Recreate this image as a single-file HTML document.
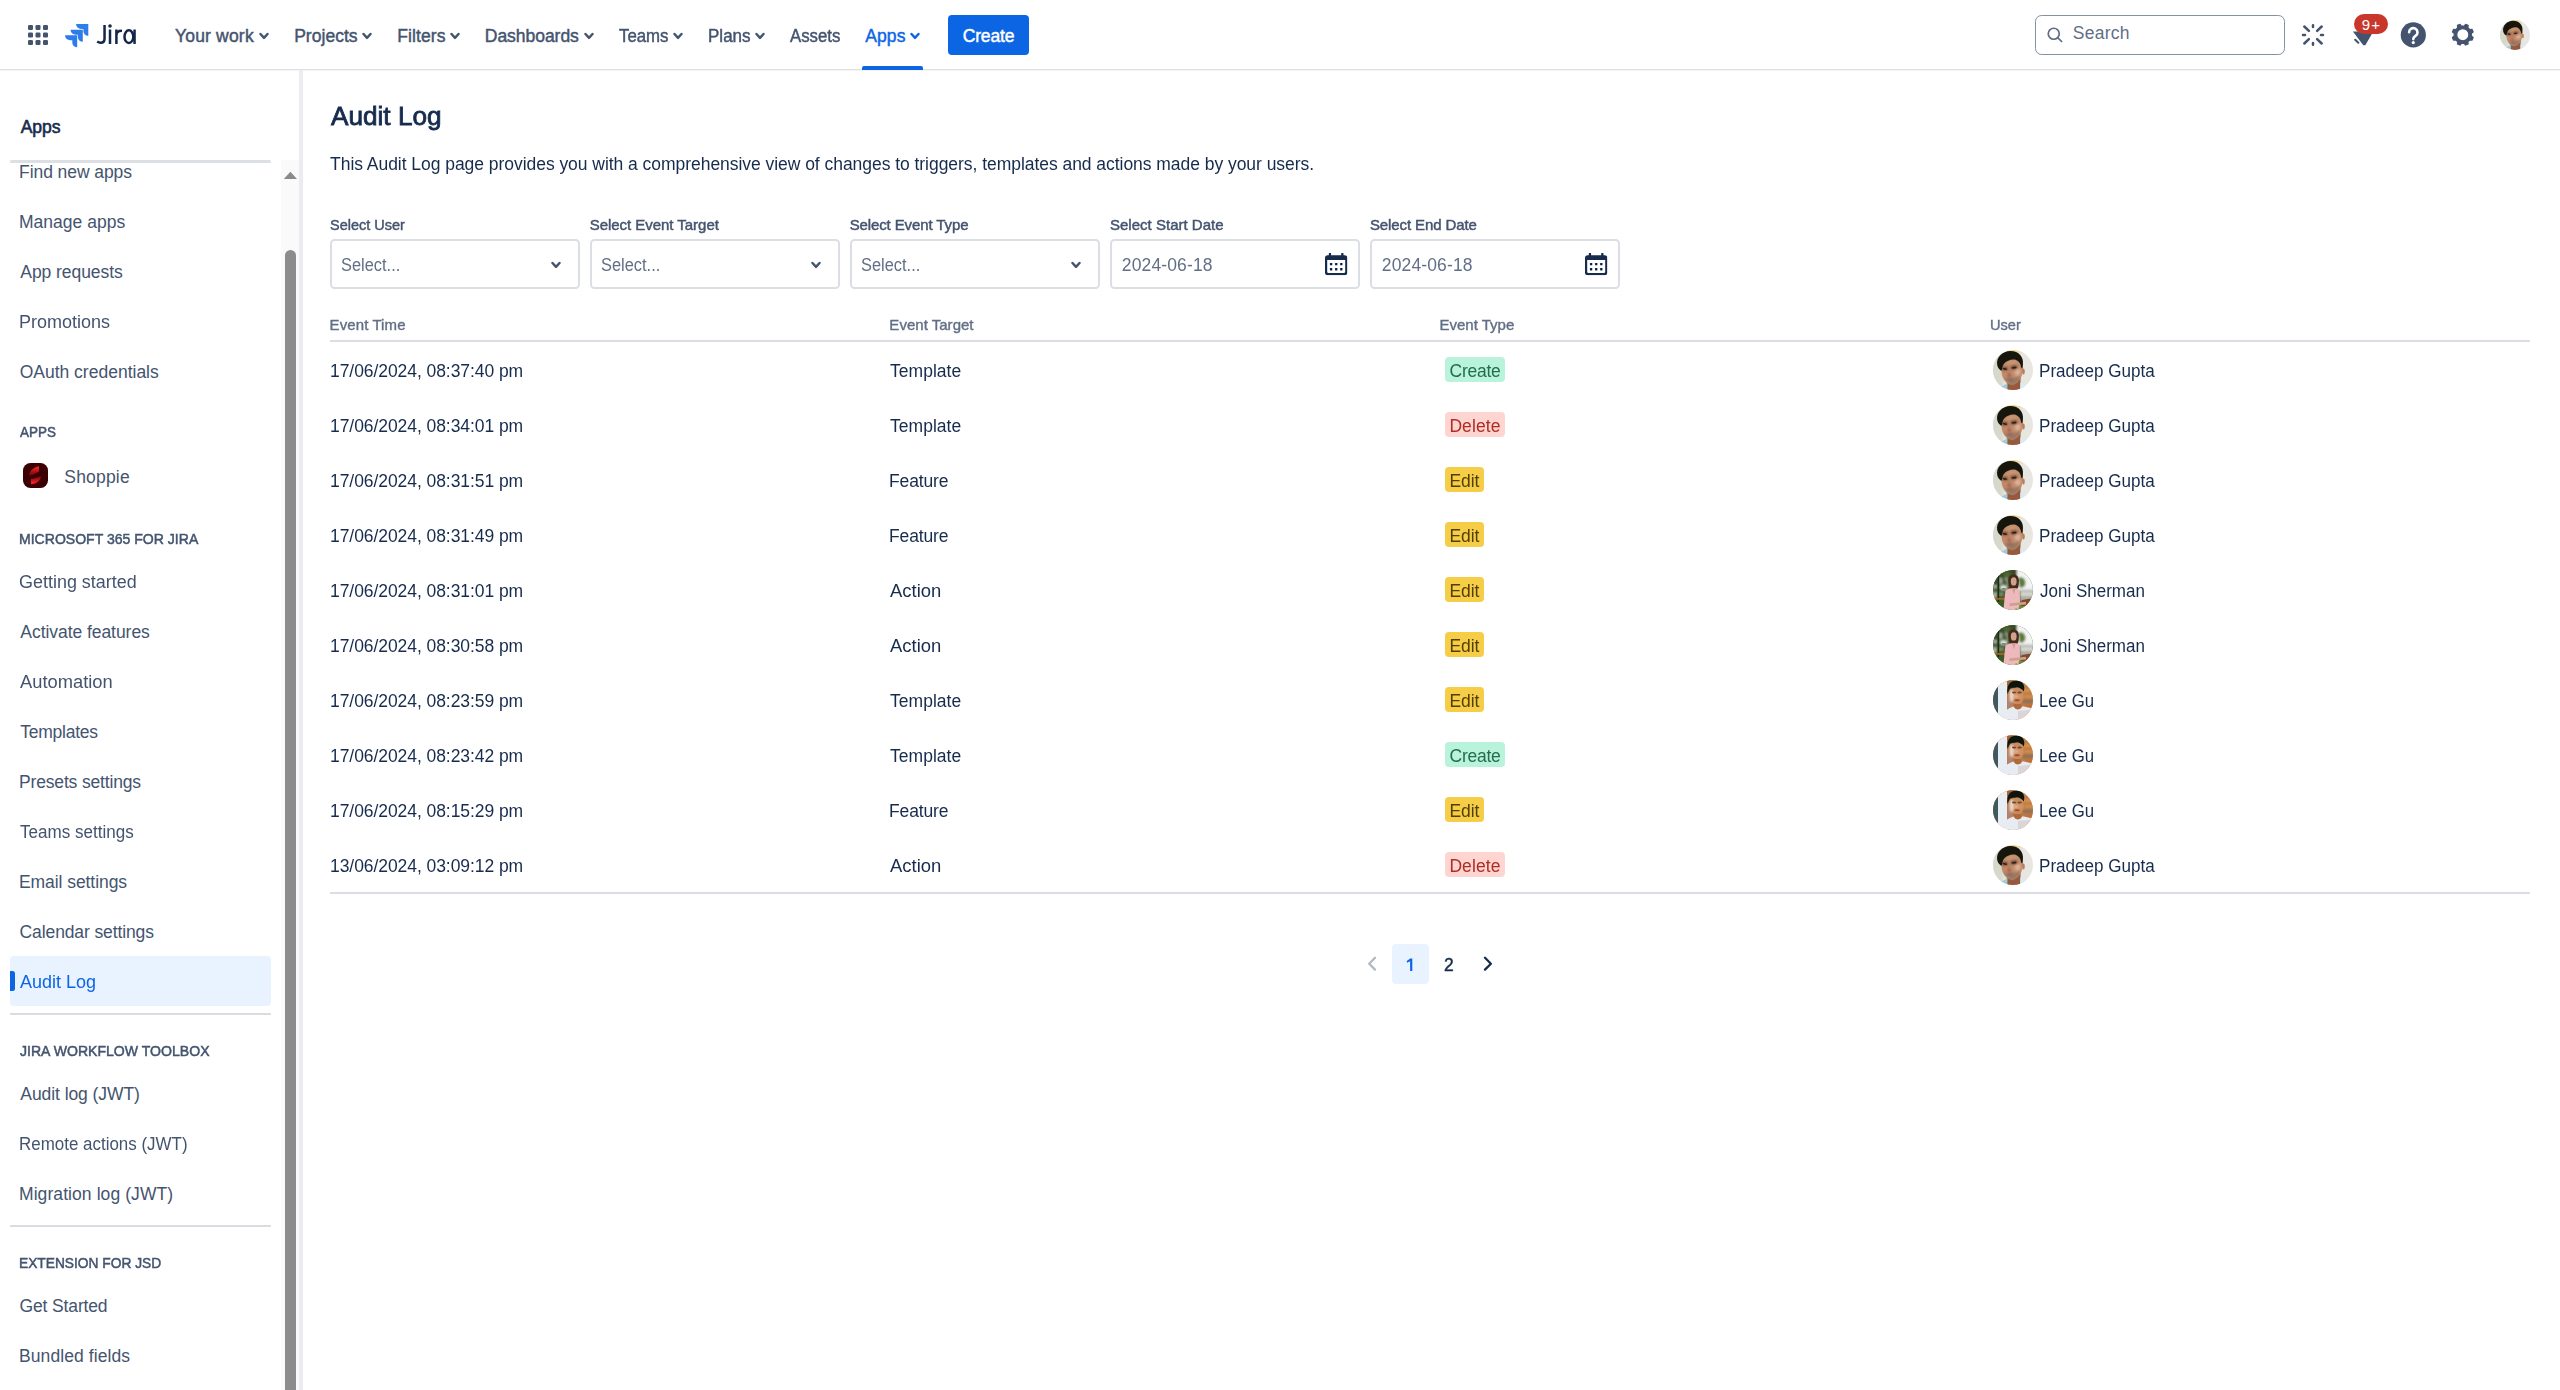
<!DOCTYPE html>
<html lang="en"><head><meta charset="utf-8"><title>Audit Log - Jira</title>
<style>
*{box-sizing:border-box;margin:0;padding:0}
html,body{width:2560px;height:1390px;overflow:hidden;background:#fff;font-family:"Liberation Sans",sans-serif}
#root{position:relative;width:2560px;height:1390px;overflow:hidden;background:#fff}
.t{position:absolute;white-space:nowrap;font-family:"Liberation Sans",sans-serif;transform-origin:0 0}
.a{position:absolute}
svg{position:absolute;overflow:visible}
.sel{position:absolute;top:239px;width:250px;height:50px;border:2px solid #DBDEE4;border-radius:4.5px;background:#fff}
.bdg{position:absolute;height:25px;border-radius:4px}
.hl{position:absolute;left:330px;width:2200px;height:2px;background:#DADDE3}
.sep{position:absolute;left:10px;width:261px;background:#DFE2E7}
</style></head><body>
<div id="root">
<svg width="0" height="0" style="position:absolute">
<defs>
<filter id="b0" x="-20%" y="-20%" width="140%" height="140%"><feGaussianBlur stdDeviation="0.55"/></filter>
<filter id="b3" x="-30%" y="-30%" width="160%" height="160%"><feGaussianBlur stdDeviation="1.1"/></filter>
<filter id="b1" x="-20%" y="-20%" width="140%" height="140%"><feGaussianBlur stdDeviation="0.75"/></filter>
<filter id="b2" x="-20%" y="-20%" width="140%" height="140%"><feGaussianBlur stdDeviation="1.6"/></filter>
<clipPath id="c40"><circle cx="20" cy="20" r="20"/></clipPath>
<symbol id="chv" viewBox="0 0 10 8"><path d="M1.5 2 L5 5.9 L8.5 2" fill="none" stroke="currentColor" stroke-width="2.4" stroke-linecap="round" stroke-linejoin="round"/></symbol>
<symbol id="cal" viewBox="0 0 22.4 22.2">
<path fill="#172B4D" fill-rule="evenodd" d="M3.8 0.9 a1.15 1.15 0 0 1 2.3 0 V2.3 H16.2 V0.9 a1.15 1.15 0 0 1 2.3 0 V2.3 h1.2 a2.7 2.7 0 0 1 2.7 2.7 v14.5 a2.7 2.7 0 0 1 -2.7 2.7 h-17 a2.7 2.7 0 0 1 -2.7 -2.7 v-14.5 a2.7 2.7 0 0 1 2.7 -2.7 h1.1 Z M2.2 6.9 v11.9 a1.3 1.3 0 0 0 1.3 1.3 h15.4 a1.3 1.3 0 0 0 1.3 -1.3 v-11.9 Z"/>
<g fill="#091E42"><rect x="4.95" y="10" width="2.3" height="2.3" rx=".4"/><rect x="10.05" y="10" width="2.3" height="2.3" rx=".4"/><rect x="15.15" y="10" width="2.3" height="2.3" rx=".4"/>
<rect x="4.95" y="15.1" width="2.3" height="2.3" rx=".4"/><rect x="10.05" y="15.1" width="2.3" height="2.3" rx=".4"/><rect x="15.15" y="15.1" width="2.3" height="2.3" rx=".4"/></g>
</symbol>
<!-- Pradeep -->
<symbol id="avP" viewBox="0 0 40 40"><g clip-path="url(#c40)">
<rect width="40" height="40" fill="#E7E6E1"/>
<rect x="-3" y="0" width="13" height="40" fill="#D6D8CC" filter="url(#b2)"/>
<path d="M10 -1 L31 -1 L29 2.4 L12 2.4Z" fill="#F3D77C" filter="url(#b2)"/>
<g filter="url(#b0)">
<path d="M14 30 L27.5 27 L27.5 42 L13.6 42Z" fill="#97583C"/>
<path d="M4 39 L14.6 33.2 L14.2 42 L3 42Z" fill="#9FCBD7"/>
<path d="M27.3 32.6 L34 35 L37 42 L27.2 42Z" fill="#D7EBF1"/>
<path d="M8.4 17 C8 24 10 29 12.6 31.6 C15 34.4 18 35.2 20 34.8 C23.4 34 26.6 30.6 28.2 27 C29.6 24 30.4 21 30 16 C29 11 25 8.6 20 9 C14 9.4 9 12 8.4 17Z" fill="#C18C6A"/>
<ellipse cx="30.5" cy="21.4" rx="1.3" ry="3" fill="#B67E5F"/>
</g>
<g filter="url(#b3)">
<ellipse cx="24.6" cy="22" rx="3" ry="3.6" fill="#E2BAA3" opacity=".8"/>
<ellipse cx="12.2" cy="24" rx="2.4" ry="3.2" fill="#C98668" opacity=".8"/>
<path d="M11.4 27 C14 29.4 22 29.4 27.2 25.4 C26.8 30 23.4 34 20 34.8 C17 35.4 13.2 32.4 11.4 27Z" fill="#8D735F" opacity=".8"/>
<ellipse cx="19" cy="12.6" rx="5" ry="2" fill="#CC9A78" opacity=".7"/>
<path d="M15.2 20 L17 20 L17.8 25.2 L14.4 25.2Z" fill="#A9745A" opacity=".7"/>
<ellipse cx="16.2" cy="25.4" rx="2.1" ry=".9" fill="#84543D"/>
<ellipse cx="17.4" cy="28.8" rx="3.4" ry="1.1" fill="#94605A"/>
</g>
<g filter="url(#b3)">
<ellipse cx="11.9" cy="18.6" rx="3.2" ry="1.9" fill="#5A3A2B" opacity=".85" transform="rotate(8 11.9 18.6)"/>
<ellipse cx="21" cy="17.4" rx="3.6" ry="2" fill="#5A3A2B" opacity=".85" transform="rotate(-6 21 17.4)"/>
</g>
<g filter="url(#b1)">
<ellipse cx="11.9" cy="18.9" rx="2.3" ry=".75" fill="#2A1A14" transform="rotate(8 11.9 18.9)"/>
<ellipse cx="21" cy="17.7" rx="2.6" ry=".8" fill="#2A1A14" transform="rotate(-6 21 17.7)"/>
</g>
<g filter="url(#b0)">
<path d="M4.2 15 C3 7.6 9.4 1.2 17.2 1.1 C25.6 .9 31 7 29.9 14.6 C29.8 16 29.6 17.4 29.2 18.6 L28.2 17.4 C27.6 13.4 25.6 10.8 22 9.6 C17.6 9.2 13.2 11 10.8 14 C9.6 16 9.2 18.4 8.6 20.8 L7.8 20.4 C5.8 19 4.6 17 4.2 15Z" fill="#18150F"/>
</g>
</g></symbol>
<!-- Joni -->
<symbol id="avJ" viewBox="0 0 40 40"><g clip-path="url(#c40)">
<rect x="-5" y="-5" width="50" height="50" fill="#455A2E"/>
<g filter="url(#b3)">
<path d="M24 -6 H48 V21 H24Z" fill="#F3F4F2"/>
<path d="M-5 6 L10 -5 L24 -5 L24 9 L14 10 L8 16 L-5 20Z" fill="#384C25"/>
<path d="M25 8 C29 6 33 9 32.4 14 C32 17 29 18.4 26.6 17.6Z" fill="#5B7C39"/>
<path d="M27 19.6 H48 V31 H27Z" fill="#B9BAB1"/>
<path d="M27 22.6 H48 V25.4 H27Z" fill="#DCDDD6"/>
<path d="M27 27.4 H48 V29 H27Z" fill="#9FA39A"/>
<path d="M22 34 H48 V46 H22Z" fill="#6C8E3B"/>
<rect x="6.2" y="8" width="3.2" height="6" fill="#A3B09E"/><rect x="12" y="7" width="2.6" height="4" fill="#8C9A88"/>
<ellipse cx="10.6" cy="17.6" rx="3.8" ry="2.6" fill="#DCE2DD"/>
<rect x="0" y="15" width="4" height="3.4" fill="#A9B3A4"/><rect x="0" y="22" width="3.8" height="6" fill="#AAB3A0"/>
<rect x="2" y="31" width="9" height="12" fill="#3A5A26"/>
<ellipse cx="15" cy="13" rx="2" ry="3" fill="#7E9170" opacity=".8"/><ellipse cx="8" cy="24" rx="3" ry="2" fill="#8FA088" opacity=".7"/><ellipse cx="14" cy="4" rx="4" ry="2" fill="#55703A" opacity=".8"/>
</g>
<g filter="url(#b0)">
<path d="M29 30 L38 28.4 L37 36.4 L28 36Z" fill="#85462A"/>
<ellipse cx="10.8" cy="18.8" rx="2.2" ry=".9" fill="#6F7F77"/>
<rect x="4.6" y="6" width="1.5" height="26" fill="#1F2A16"/>
<rect x="-2" y="28" width="15" height="1.7" fill="#A7651F"/>
<path d="M15.4 13 C14.6 7 17.4 4.6 20.6 4.6 C24 4.6 26.6 7.2 25.8 13 C25.6 15.4 25.6 17 24.4 18.6 L17 18.6 C15.6 17 15.6 15.4 15.4 13Z" fill="#46291F"/>
<ellipse cx="20.7" cy="11.4" rx="2.9" ry="4.2" fill="#CFA28B"/>
<path d="M12.4 20.8 C14 17.8 25 17.4 26.8 20.2 L27 33 L23.4 46 L9.8 46 L11.4 30Z" fill="#EDB9BC"/>
<path d="M19 18.4 L22.6 18.4 L21 24.6Z" fill="#CFA089"/>
<path d="M16.4 33.6 L33 31.8 L33 34.4 L16.6 36Z" fill="#CFA089"/>
<rect x="22.6" y="38" width="1" height="5" fill="#7A9B45"/>
</g></g></symbol>
<!-- Lee -->
<symbol id="avL" viewBox="0 0 40 40"><g clip-path="url(#c40)">
<rect x="-5" y="-5" width="50" height="50" fill="#BD7B47"/>
<g filter="url(#b3)">
<rect x="28" y="9" width="17" height="3" fill="#D6934F"/><rect x="31" y="15" width="14" height="3" fill="#D08C4C"/>
<rect x="30" y="19.6" width="15" height="3.6" fill="#8A7156"/><rect x="33" y="24.6" width="12" height="3" fill="#C8692F"/>
<rect x="13" y="-5" width="6" height="12" fill="#A8623A"/>
<rect x="14" y="18" width="5" height="10" fill="#B08478"/>
</g>
<g filter="url(#b1)">
<rect x="-6" y="-5" width="11" height="50" fill="#3F595F"/>
<rect x="5" y="-5" width="9" height="50" fill="#E6EEF3"/>
<path d="M14.4 14 C13.4 4 18 .6 24 .6 C30 .8 32.4 6 30.8 11.6 L29.4 9.8 C26 7.4 20 7 17.2 8.8 C16.2 10.4 15.6 12.4 14.4 14Z" fill="#0D130F"/>
<ellipse cx="24.2" cy="16" rx="6.6" ry="8.8" fill="#C98B5D"/>
<path d="M20.6 24 L28 24 L29 30 L21 30Z" fill="#AF6A3A"/>
</g>
<g filter="url(#b3)">
<ellipse cx="18.6" cy="15.6" rx="2.2" ry="6.6" fill="#EDD9CD"/>
<ellipse cx="23.4" cy="16.4" rx="1.5" ry="1.7" fill="#E8C3A6"/>
<ellipse cx="27.6" cy="17" rx="2" ry="2.4" fill="#D69560"/>
</g>
<g filter="url(#b1)">
<ellipse cx="21" cy="12.6" rx="2.1" ry="1" fill="#6F4530"/><ellipse cx="26.6" cy="12.4" rx="2.2" ry="1" fill="#6F4530"/>
<ellipse cx="24" cy="20.3" rx="2.8" ry="1.05" fill="#A8452F"/>
<path d="M6 37 C10 31 17 27.4 20.6 26.4 C22.4 30.4 27 30.6 29.4 26.2 C33 26.8 38 28 45 30 V46 H3Z" fill="#E9EBF2"/>
<path d="M25 31 L45 29 L45 46 L25 46Z" fill="#D8CFCF" opacity=".8"/>
</g></g></symbol>

</defs></svg>

<!-- ============ TOP NAV ============ -->
<div class="a" style="left:0;top:69px;width:2560px;height:1px;background:#DCDFE4"></div>
<div class="a" style="left:0;top:70px;width:2560px;height:1px;background:#F4F5F7"></div>
<svg style="left:28px;top:25px" width="20" height="20" viewBox="0 0 20 20" fill="#44546F">
<rect x="0" y="0" width="5" height="5" rx="1.2"/><rect x="7.5" y="0" width="5" height="5" rx="1.2"/><rect x="15" y="0" width="5" height="5" rx="1.2"/>
<rect x="0" y="7.5" width="5" height="5" rx="1.2"/><rect x="7.5" y="7.5" width="5" height="5" rx="1.2"/><rect x="15" y="7.5" width="5" height="5" rx="1.2"/>
<rect x="0" y="15" width="5" height="5" rx="1.2"/><rect x="7.5" y="15" width="5" height="5" rx="1.2"/><rect x="15" y="15" width="5" height="5" rx="1.2"/>
</svg>
<svg style="left:64.9px;top:23.9px" width="23.3" height="23.5" viewBox="0 0 23.3 23.5">
<defs><linearGradient id="jg1" x1="1" y1="0" x2=".35" y2=".75"><stop offset=".15" stop-color="#1B63D3"/><stop offset="1" stop-color="#2F80EE"/></linearGradient>
<path id="jarrow" d="M0 0 h12.2 v12 a4.9 4.9 0 0 1 -4.9 -4.9 v-2.2 h-2.3 a5 4.9 0 0 1 -5 -4.9 z"/></defs>
<use href="#jarrow" x="11.1" y="0" fill="#2F7DE9"/>
<use href="#jarrow" x="5.6" y="5.85" fill="#2D7CE8"/>
<use href="#jarrow" x="0" y="11.35" fill="#2C7DEB"/>
</svg>
<svg style="left:0;top:0" width="150" height="60" viewBox="0 0 150 60" fill="none" stroke="#14264A" stroke-width="2.5">
<path d="M104.55 24.9 V38.4 C104.55 41.2 103 42.7 100.7 42.7 C99.3 42.7 98.2 42.3 97.2 41.6"/>
<path d="M110 29.5 V43.95"/><circle cx="110" cy="26" r="1.8" fill="#14264A" stroke="none"/>
<path d="M116.4 29.5 V43.95 M116.4 35.6 C116.4 32.3 118.6 30.6 122 30.9"/>
<ellipse cx="128.9" cy="36.65" rx="4.4" ry="6.3"/><path d="M134.55 29.5 V43.95"/>
</svg>
<!-- nav chevrons -->
<svg style="left:259.1px;top:31.5px;color:#44546F" width="10" height="8"><use href="#chv"/></svg>
<svg style="left:362.2px;top:31.5px;color:#44546F" width="10" height="8"><use href="#chv"/></svg>
<svg style="left:450px;top:31.5px;color:#44546F" width="10" height="8"><use href="#chv"/></svg>
<svg style="left:583.8px;top:31.5px;color:#44546F" width="10" height="8"><use href="#chv"/></svg>
<svg style="left:673px;top:31.5px;color:#44546F" width="10" height="8"><use href="#chv"/></svg>
<svg style="left:755px;top:31.5px;color:#44546F" width="10" height="8"><use href="#chv"/></svg>
<svg style="left:910px;top:31.5px;color:#0C66E4" width="10" height="8"><use href="#chv"/></svg>
<div class="a" style="left:862px;top:66px;width:61px;height:4px;background:#0C66E4;border-radius:2px 2px 0 0"></div>
<div class="a" style="left:948px;top:15px;width:81px;height:40px;background:#0C66E4;border-radius:4px"></div>
<!-- search -->
<div class="a" style="left:2035px;top:15px;width:250px;height:40px;border:1px solid #8590A2;border-radius:6.5px;background:#fff"></div>
<svg style="left:2045px;top:25px" width="20" height="20" viewBox="0 0 20 20" fill="none" stroke="#5E6C84" stroke-width="1.7" stroke-linecap="round"><circle cx="8.75" cy="8.75" r="5.5"/><path d="M12.9 12.9 L16.6 16.5"/></svg>
<!-- sparkle -->
<svg style="left:2301px;top:23px" width="24" height="24" viewBox="0 0 24 24" fill="none" stroke="#44546F" stroke-width="2.5" stroke-linecap="round">
<path d="M12 2.2 V4 M12 20 V21.8 M2 12 H4 M20 12 H22 M3.3 3.5 L7.9 7.9 M20.7 3.5 L16.1 7.9 M3.3 20.5 L7.9 16.1 M20.7 20.5 L16.1 16.1"/></svg>
<!-- bell -->
<svg style="left:2350px;top:26px" width="26" height="22" viewBox="0 0 26 22"><path d="M2.9 5.6 L23.3 5.6 L15.3 19.2 L13.3 19.2 Z" fill="#44546F"/><path d="M5.2 13.8 L8.3 16.7" stroke="#44546F" stroke-width="2.1" stroke-linecap="round"/></svg>
<div class="a" style="left:2354px;top:14px;width:34px;height:20px;border-radius:10px;background:#C9372C"></div>
<!-- help -->
<svg style="left:2400px;top:22px" width="26" height="26" viewBox="0 0 26 26"><circle cx="13.3" cy="12.9" r="12.6" fill="#44546F"/>
<path d="M9.1 10.3 a4.2 4.2 0 1 1 6.4 3.6 c-1.6 1 -2.2 1.7 -2.2 3.2" fill="none" stroke="#fff" stroke-width="2.6" stroke-linecap="round"/><circle cx="13.3" cy="20.6" r="1.6" fill="#fff"/></svg>
<svg style="left:2450px;top:22px" width="26" height="26" viewBox="0 0 26 26"><path d="M14.23 4.12 L15.62 2.38 L18.10 3.41 L17.86 5.62 L19.88 7.64 L22.09 7.40 L23.12 9.88 L21.38 11.27 L21.38 14.13 L23.12 15.52 L22.09 18.00 L19.88 17.76 L17.86 19.78 L18.10 21.99 L15.62 23.02 L14.23 21.28 L11.37 21.28 L9.98 23.02 L7.50 21.99 L7.74 19.78 L5.72 17.76 L3.51 18.00 L2.48 15.52 L4.22 14.13 L4.22 11.27 L2.48 9.88 L3.51 7.40 L5.72 7.64 L7.74 5.62 L7.50 3.41 L9.98 2.38 L11.37 4.12 Z M6.70 12.70 a6.1 6.1 0 1 0 12.2 0 a6.1 6.1 0 1 0 -12.2 0 Z" fill="#44546F" fill-rule="evenodd" stroke="#44546F" stroke-width="1.3" stroke-linejoin="round"/></svg>
<svg class="av" style="left:2500px;top:20px" width="30" height="30" viewBox="0 0 40 40"><use href="#avP"/></svg>

<!-- ============ SIDEBAR ============ -->
<div class="a" style="left:299px;top:70px;width:4px;height:1320px;background:#EBECF0"></div>
<div class="a" style="left:281px;top:160px;width:18px;height:1230px;background:#FAFAFA"></div>
<div class="sep" style="top:160px;height:3px;background:#DCDFE4;border-radius:1.5px"></div>
<svg style="left:283px;top:171px" width="16" height="9" viewBox="0 0 16 9"><path d="M0.8 8 L14 8 L7.4 0.7 Z" fill="#8A8A8A"/></svg>
<div class="a" style="left:285px;top:250px;width:11px;height:1160px;border-radius:5.5px;background:#8C8C8C"></div>
<svg style="left:23px;top:463px" width="25" height="25" viewBox="0 0 25 25">
<defs><linearGradient id="sg1" x1="0" y1="0" x2="0" y2="1"><stop offset=".1" stop-color="#FF1F29"/><stop offset="1" stop-color="#5E060B"/></linearGradient>
<linearGradient id="sg2" x1="0" y1="0" x2="0" y2="1"><stop offset="0" stop-color="#5E060B"/><stop offset=".85" stop-color="#FF1F29"/></linearGradient></defs>
<rect width="25" height="25" rx="7.5" fill="#3B0002"/>
<path d="M16 3.2 L16 8.4 C13.6 9.2 11.4 12 6 12.8 C6 8.6 10.4 4 16 3.2Z" fill="url(#sg1)"/>
<path d="M8 21.3 L7.9 16.1 C11 15.7 14 14.4 18.1 12.9 C18.2 16.6 13.6 21 8 21.3Z" fill="url(#sg2)"/>
</svg>
<div class="a" style="left:10px;top:956px;width:261px;height:50px;border-radius:4px;background:#E9F2FF"></div>
<div class="a" style="left:10px;top:971px;width:5px;height:20px;border-radius:0 2.5px 2.5px 0;background:#0C66E4"></div>
<div class="sep" style="top:1013px;height:2px;background:#D9DCE1"></div>
<div class="sep" style="top:1225px;height:2px;background:#D9DCE1"></div>

<!-- ============ MAIN ============ -->
<div class="sel" style="left:330px"></div><div class="sel" style="left:590px"></div><div class="sel" style="left:850px"></div>
<div class="sel" style="left:1110px"></div><div class="sel" style="left:1370px"></div>
<svg style="left:551px;top:260.5px;color:#44546F" width="10" height="8"><use href="#chv"/></svg>
<svg style="left:811px;top:260.5px;color:#44546F" width="10" height="8"><use href="#chv"/></svg>
<svg style="left:1071px;top:260.5px;color:#44546F" width="10" height="8"><use href="#chv"/></svg>
<svg style="left:1324.8px;top:252.8px" width="22.4" height="22.2"><use href="#cal"/></svg>
<svg style="left:1584.8px;top:252.8px" width="22.4" height="22.2"><use href="#cal"/></svg>
<div class="hl" style="top:340px"></div>
<div class="hl" style="top:892px"></div>
<div class="bdg" style="left:1445px;top:357px;width:59.9px;background:#BAF3DB"></div>
<svg class="av" style="left:1993px;top:350px" width="40" height="40" viewBox="0 0 40 40"><use href="#avP"/></svg>
<div class="bdg" style="left:1445px;top:412px;width:59.9px;background:#FFD5D2"></div>
<svg class="av" style="left:1993px;top:405px" width="40" height="40" viewBox="0 0 40 40"><use href="#avP"/></svg>
<div class="bdg" style="left:1445px;top:467px;width:38.9px;background:#F5CD47"></div>
<svg class="av" style="left:1993px;top:460px" width="40" height="40" viewBox="0 0 40 40"><use href="#avP"/></svg>
<div class="bdg" style="left:1445px;top:522px;width:38.9px;background:#F5CD47"></div>
<svg class="av" style="left:1993px;top:515px" width="40" height="40" viewBox="0 0 40 40"><use href="#avP"/></svg>
<div class="bdg" style="left:1445px;top:577px;width:38.9px;background:#F5CD47"></div>
<svg class="av" style="left:1993px;top:570px" width="40" height="40" viewBox="0 0 40 40"><use href="#avJ"/></svg>
<div class="bdg" style="left:1445px;top:632px;width:38.9px;background:#F5CD47"></div>
<svg class="av" style="left:1993px;top:625px" width="40" height="40" viewBox="0 0 40 40"><use href="#avJ"/></svg>
<div class="bdg" style="left:1445px;top:687px;width:38.9px;background:#F5CD47"></div>
<svg class="av" style="left:1993px;top:680px" width="40" height="40" viewBox="0 0 40 40"><use href="#avL"/></svg>
<div class="bdg" style="left:1445px;top:742px;width:59.9px;background:#BAF3DB"></div>
<svg class="av" style="left:1993px;top:735px" width="40" height="40" viewBox="0 0 40 40"><use href="#avL"/></svg>
<div class="bdg" style="left:1445px;top:797px;width:38.9px;background:#F5CD47"></div>
<svg class="av" style="left:1993px;top:790px" width="40" height="40" viewBox="0 0 40 40"><use href="#avL"/></svg>
<div class="bdg" style="left:1445px;top:852px;width:59.9px;background:#FFD5D2"></div>
<svg class="av" style="left:1993px;top:845px" width="40" height="40" viewBox="0 0 40 40"><use href="#avP"/></svg>
<!-- pagination -->
<svg style="left:1366px;top:955px" width="12" height="18" viewBox="0 0 12 18"><path d="M9 2.8 L3.2 8.7 L9 14.6" fill="none" stroke="#B3B9C4" stroke-width="2.3" stroke-linecap="round" stroke-linejoin="round"/></svg>
<div class="a" style="left:1392px;top:944px;width:37px;height:40px;border-radius:4px;background:#E9F2FF"></div>
<svg style="left:0;top:0" width="10" height="10"><path d="M1410.2 958.4 L1412.3 958.4 L1412.3 970.9 L1410.1 970.9 L1410.1 961.2 L1407.1 962.7 L1406.7 960.9 Z" fill="#0C66E4"/></svg>
<svg style="left:1482px;top:955px" width="12" height="18" viewBox="0 0 12 18"><path d="M3 2.8 L8.9 8.7 L3 14.6" fill="none" stroke="#172B4D" stroke-width="2.3" stroke-linecap="round" stroke-linejoin="round"/></svg>

<span class="t" style="left:174.96px;top:25.00px;font-size:17.50px;line-height:23.55px;color:#44546F;-webkit-text-stroke:0.45px currentColor;letter-spacing:0.190px;">Your work</span>
<span class="t" style="left:294.16px;top:25.00px;font-size:17.50px;line-height:23.55px;color:#44546F;-webkit-text-stroke:0.45px currentColor;letter-spacing:0.034px;">Projects</span>
<span class="t" style="left:397.26px;top:25.00px;font-size:17.50px;line-height:23.55px;color:#44546F;-webkit-text-stroke:0.45px currentColor;letter-spacing:0.110px;">Filters</span>
<span class="t" style="left:484.84px;top:25.00px;font-size:17.50px;line-height:23.55px;color:#44546F;-webkit-text-stroke:0.45px currentColor;letter-spacing:-0.040px;">Dashboards</span>
<span class="t" style="left:618.85px;top:25.00px;font-size:17.50px;line-height:23.55px;color:#44546F;-webkit-text-stroke:0.45px currentColor;transform:scaleX(0.9606);">Teams</span>
<span class="t" style="left:707.77px;top:25.00px;font-size:17.50px;line-height:23.55px;color:#44546F;-webkit-text-stroke:0.45px currentColor;transform:scaleX(0.9730);">Plans</span>
<span class="t" style="left:790.37px;top:25.00px;font-size:17.50px;line-height:23.55px;color:#44546F;-webkit-text-stroke:0.45px currentColor;transform:scaleX(0.9570);">Assets</span>
<span class="t" style="left:865.19px;top:25.00px;font-size:17.50px;line-height:23.55px;color:#0C66E4;-webkit-text-stroke:0.45px currentColor;letter-spacing:0.136px;">Apps</span>
<span class="t" style="left:962.68px;top:25.00px;font-size:17.50px;line-height:23.55px;color:#FFFFFF;-webkit-text-stroke:0.45px currentColor;letter-spacing:-0.140px;">Create</span>
<span class="t" style="left:2072.81px;top:22.00px;font-size:17.50px;line-height:23.55px;color:#626F86;letter-spacing:0.265px;">Search</span>
<span class="t" style="left:2361.70px;top:14.72px;font-size:15.00px;line-height:20.75px;color:#FFFFFF;letter-spacing:1.200px;">9+</span>
<span class="t" style="left:20.63px;top:116.00px;font-size:17.50px;line-height:23.55px;color:#172B4D;-webkit-text-stroke:0.60px currentColor;letter-spacing:0.020px;">Apps</span>
<span class="t" style="left:19.09px;top:161.00px;font-size:17.50px;line-height:23.55px;color:#44546F;letter-spacing:-0.073px;">Find new apps</span>
<span class="t" style="left:18.99px;top:211.00px;font-size:17.50px;line-height:23.55px;color:#44546F;letter-spacing:0.025px;">Manage apps</span>
<span class="t" style="left:20.33px;top:261.00px;font-size:17.50px;line-height:23.55px;color:#44546F;letter-spacing:-0.070px;">App requests</span>
<span class="t" style="left:18.91px;top:311.00px;font-size:17.50px;line-height:23.55px;color:#44546F;transform:scaleX(1.0296);">Promotions</span>
<span class="t" style="left:19.63px;top:361.00px;font-size:17.50px;line-height:23.55px;color:#44546F;letter-spacing:0.002px;">OAuth credentials</span>
<span class="t" style="left:19.10px;top:571.00px;font-size:17.50px;line-height:23.55px;color:#44546F;transform:scaleX(1.0258);">Getting started</span>
<span class="t" style="left:20.33px;top:621.00px;font-size:17.50px;line-height:23.55px;color:#44546F;letter-spacing:-0.054px;">Activate features</span>
<span class="t" style="left:20.28px;top:671.00px;font-size:17.50px;line-height:23.55px;color:#44546F;transform:scaleX(1.0473);">Automation</span>
<span class="t" style="left:20.16px;top:721.00px;font-size:17.50px;line-height:23.55px;color:#44546F;letter-spacing:-0.225px;">Templates</span>
<span class="t" style="left:19.04px;top:771.00px;font-size:17.50px;line-height:23.55px;color:#44546F;letter-spacing:-0.167px;">Presets settings</span>
<span class="t" style="left:19.93px;top:821.00px;font-size:17.50px;line-height:23.55px;color:#44546F;transform:scaleX(0.9742);">Teams settings</span>
<span class="t" style="left:18.99px;top:871.00px;font-size:17.50px;line-height:23.55px;color:#44546F;letter-spacing:-0.065px;">Email settings</span>
<span class="t" style="left:19.60px;top:921.00px;font-size:17.50px;line-height:23.55px;color:#44546F;letter-spacing:-0.114px;">Calendar settings</span>
<span class="t" style="left:20.33px;top:1083.01px;font-size:17.50px;line-height:23.55px;color:#44546F;letter-spacing:-0.074px;">Audit log (JWT)</span>
<span class="t" style="left:19.41px;top:1133.01px;font-size:17.50px;line-height:23.55px;color:#44546F;transform:scaleX(0.9682);">Remote actions (JWT)</span>
<span class="t" style="left:18.99px;top:1183.01px;font-size:17.50px;line-height:23.55px;color:#44546F;letter-spacing:0.081px;">Migration log (JWT)</span>
<span class="t" style="left:19.57px;top:1295.00px;font-size:17.50px;line-height:23.55px;color:#44546F;letter-spacing:-0.146px;">Get Started</span>
<span class="t" style="left:18.99px;top:1345.00px;font-size:17.50px;line-height:23.55px;color:#44546F;letter-spacing:0.088px;">Bundled fields</span>
<span class="t" style="left:19.93px;top:971.00px;font-size:17.50px;line-height:23.55px;color:#0C66E4;transform:scaleX(1.0280);">Audit Log</span>
<span class="t" style="left:64.35px;top:466.01px;font-size:17.50px;line-height:23.55px;color:#44546F;letter-spacing:0.179px;">Shoppie</span>
<span class="t" style="left:20.17px;top:422.01px;font-size:15.00px;line-height:20.75px;color:#44546F;-webkit-text-stroke:0.51px currentColor;transform:scaleX(0.8963);">APPS</span>
<span class="t" style="left:19.22px;top:529.01px;font-size:15.00px;line-height:20.75px;color:#44546F;-webkit-text-stroke:0.51px currentColor;transform:scaleX(0.9364);">MICROSOFT 365 FOR JIRA</span>
<span class="t" style="left:20.41px;top:1041.00px;font-size:15.00px;line-height:20.75px;color:#44546F;-webkit-text-stroke:0.51px currentColor;transform:scaleX(0.9386);">JIRA WORKFLOW TOOLBOX</span>
<span class="t" style="left:19.02px;top:1253.00px;font-size:15.00px;line-height:20.75px;color:#44546F;-webkit-text-stroke:0.51px currentColor;transform:scaleX(0.9169);">EXTENSION FOR JSD</span>
<div id="txt" style="position:absolute;left:0;top:0;width:2560px;height:1390px;will-change:transform">
<span class="t" style="left:330.72px;top:101.00px;font-size:25.00px;line-height:31.93px;color:#172B4D;-webkit-text-stroke:0.78px currentColor;transform:scaleX(1.0465);">Audit Log</span>
<span class="t" style="left:330.10px;top:153.01px;font-size:17.50px;line-height:23.55px;color:#172B4D;letter-spacing:-0.043px;">This Audit Log page provides you with a comprehensive view of changes to triggers, templates and actions made by your users.</span>
<span class="t" style="left:329.51px;top:215.00px;font-size:15.00px;line-height:20.75px;color:#44546F;-webkit-text-stroke:0.46px currentColor;transform:scaleX(0.9652);">Select User</span>
<span class="t" style="left:589.71px;top:215.00px;font-size:15.00px;line-height:20.75px;color:#44546F;-webkit-text-stroke:0.46px currentColor;letter-spacing:-0.036px;">Select Event Target</span>
<span class="t" style="left:849.63px;top:215.00px;font-size:15.00px;line-height:20.75px;color:#44546F;-webkit-text-stroke:0.46px currentColor;letter-spacing:-0.109px;">Select Event Type</span>
<span class="t" style="left:1110.01px;top:215.00px;font-size:15.00px;line-height:20.75px;color:#44546F;-webkit-text-stroke:0.46px currentColor;letter-spacing:0.012px;">Select Start Date</span>
<span class="t" style="left:1369.98px;top:215.00px;font-size:15.00px;line-height:20.75px;color:#44546F;-webkit-text-stroke:0.46px currentColor;letter-spacing:-0.112px;">Select End Date</span>
<span class="t" style="left:341.40px;top:254.00px;font-size:17.50px;line-height:23.55px;color:#626F86;transform:scaleX(0.9373);">Select...</span>
<span class="t" style="left:601.40px;top:254.00px;font-size:17.50px;line-height:23.55px;color:#626F86;transform:scaleX(0.9373);">Select...</span>
<span class="t" style="left:861.40px;top:254.00px;font-size:17.50px;line-height:23.55px;color:#626F86;transform:scaleX(0.9373);">Select...</span>
<span class="t" style="left:1121.85px;top:254.00px;font-size:17.50px;line-height:23.55px;color:#626F86;letter-spacing:0.124px;">2024-06-18</span>
<span class="t" style="left:1381.85px;top:254.00px;font-size:17.50px;line-height:23.55px;color:#626F86;letter-spacing:0.124px;">2024-06-18</span>
<span class="t" style="left:329.58px;top:315.01px;font-size:15.00px;line-height:20.75px;color:#626F86;-webkit-text-stroke:0.39px currentColor;letter-spacing:0.096px;">Event Time</span>
<span class="t" style="left:889.37px;top:315.01px;font-size:15.00px;line-height:20.75px;color:#626F86;-webkit-text-stroke:0.39px currentColor;letter-spacing:0.021px;">Event Target</span>
<span class="t" style="left:1439.38px;top:315.01px;font-size:15.00px;line-height:20.75px;color:#626F86;-webkit-text-stroke:0.39px currentColor;letter-spacing:0.016px;">Event Type</span>
<span class="t" style="left:1989.84px;top:315.01px;font-size:15.00px;line-height:20.75px;color:#626F86;-webkit-text-stroke:0.39px currentColor;transform:scaleX(0.9727);">User</span>
<span class="t" style="left:330.02px;top:360.01px;font-size:17.50px;line-height:23.55px;color:#172B4D;letter-spacing:-0.067px;">17/06/2024, 08:37:40 pm</span>
<span class="t" style="left:890.00px;top:360.01px;font-size:17.50px;line-height:23.55px;color:#172B4D;letter-spacing:0.025px;">Template</span>
<span class="t" style="left:1449.61px;top:360.01px;font-size:17.50px;line-height:23.55px;color:#216E4E;letter-spacing:-0.262px;">Create</span>
<span class="t" style="left:2039.36px;top:360.01px;font-size:17.50px;line-height:23.55px;color:#172B4D;transform:scaleX(0.9747);">Pradeep Gupta</span>
<span class="t" style="left:330.02px;top:415.01px;font-size:17.50px;line-height:23.55px;color:#172B4D;letter-spacing:-0.067px;">17/06/2024, 08:34:01 pm</span>
<span class="t" style="left:890.00px;top:415.01px;font-size:17.50px;line-height:23.55px;color:#172B4D;letter-spacing:0.025px;">Template</span>
<span class="t" style="left:1449.38px;top:415.01px;font-size:17.50px;line-height:23.55px;color:#AE2E24;letter-spacing:0.093px;">Delete</span>
<span class="t" style="left:2039.36px;top:415.01px;font-size:17.50px;line-height:23.55px;color:#172B4D;transform:scaleX(0.9747);">Pradeep Gupta</span>
<span class="t" style="left:330.02px;top:470.01px;font-size:17.50px;line-height:23.55px;color:#172B4D;letter-spacing:-0.067px;">17/06/2024, 08:31:51 pm</span>
<span class="t" style="left:889.06px;top:470.01px;font-size:17.50px;line-height:23.55px;color:#172B4D;letter-spacing:-0.150px;">Feature</span>
<span class="t" style="left:1449.60px;top:470.01px;font-size:17.50px;line-height:23.55px;color:#533F04;letter-spacing:-0.162px;">Edit</span>
<span class="t" style="left:2039.36px;top:470.01px;font-size:17.50px;line-height:23.55px;color:#172B4D;transform:scaleX(0.9747);">Pradeep Gupta</span>
<span class="t" style="left:330.02px;top:525.01px;font-size:17.50px;line-height:23.55px;color:#172B4D;letter-spacing:-0.067px;">17/06/2024, 08:31:49 pm</span>
<span class="t" style="left:889.06px;top:525.01px;font-size:17.50px;line-height:23.55px;color:#172B4D;letter-spacing:-0.150px;">Feature</span>
<span class="t" style="left:1449.60px;top:525.01px;font-size:17.50px;line-height:23.55px;color:#533F04;letter-spacing:-0.162px;">Edit</span>
<span class="t" style="left:2039.36px;top:525.01px;font-size:17.50px;line-height:23.55px;color:#172B4D;transform:scaleX(0.9747);">Pradeep Gupta</span>
<span class="t" style="left:330.02px;top:580.01px;font-size:17.50px;line-height:23.55px;color:#172B4D;letter-spacing:-0.067px;">17/06/2024, 08:31:01 pm</span>
<span class="t" style="left:890.17px;top:580.01px;font-size:17.50px;line-height:23.55px;color:#172B4D;transform:scaleX(1.0539);">Action</span>
<span class="t" style="left:1449.60px;top:580.01px;font-size:17.50px;line-height:23.55px;color:#533F04;letter-spacing:-0.162px;">Edit</span>
<span class="t" style="left:2040.34px;top:580.01px;font-size:17.50px;line-height:23.55px;color:#172B4D;transform:scaleX(0.9711);">Joni Sherman</span>
<span class="t" style="left:330.02px;top:635.01px;font-size:17.50px;line-height:23.55px;color:#172B4D;letter-spacing:-0.067px;">17/06/2024, 08:30:58 pm</span>
<span class="t" style="left:890.17px;top:635.01px;font-size:17.50px;line-height:23.55px;color:#172B4D;transform:scaleX(1.0539);">Action</span>
<span class="t" style="left:1449.60px;top:635.01px;font-size:17.50px;line-height:23.55px;color:#533F04;letter-spacing:-0.162px;">Edit</span>
<span class="t" style="left:2040.34px;top:635.01px;font-size:17.50px;line-height:23.55px;color:#172B4D;transform:scaleX(0.9711);">Joni Sherman</span>
<span class="t" style="left:330.02px;top:690.01px;font-size:17.50px;line-height:23.55px;color:#172B4D;letter-spacing:-0.067px;">17/06/2024, 08:23:59 pm</span>
<span class="t" style="left:890.00px;top:690.01px;font-size:17.50px;line-height:23.55px;color:#172B4D;letter-spacing:0.025px;">Template</span>
<span class="t" style="left:1449.60px;top:690.01px;font-size:17.50px;line-height:23.55px;color:#533F04;letter-spacing:-0.162px;">Edit</span>
<span class="t" style="left:2039.36px;top:690.01px;font-size:17.50px;line-height:23.55px;color:#172B4D;transform:scaleX(0.9586);">Lee Gu</span>
<span class="t" style="left:330.02px;top:745.01px;font-size:17.50px;line-height:23.55px;color:#172B4D;letter-spacing:-0.067px;">17/06/2024, 08:23:42 pm</span>
<span class="t" style="left:890.00px;top:745.01px;font-size:17.50px;line-height:23.55px;color:#172B4D;letter-spacing:0.025px;">Template</span>
<span class="t" style="left:1449.61px;top:745.01px;font-size:17.50px;line-height:23.55px;color:#216E4E;letter-spacing:-0.262px;">Create</span>
<span class="t" style="left:2039.36px;top:745.01px;font-size:17.50px;line-height:23.55px;color:#172B4D;transform:scaleX(0.9586);">Lee Gu</span>
<span class="t" style="left:330.02px;top:800.01px;font-size:17.50px;line-height:23.55px;color:#172B4D;letter-spacing:-0.067px;">17/06/2024, 08:15:29 pm</span>
<span class="t" style="left:889.06px;top:800.01px;font-size:17.50px;line-height:23.55px;color:#172B4D;letter-spacing:-0.150px;">Feature</span>
<span class="t" style="left:1449.60px;top:800.01px;font-size:17.50px;line-height:23.55px;color:#533F04;letter-spacing:-0.162px;">Edit</span>
<span class="t" style="left:2039.36px;top:800.01px;font-size:17.50px;line-height:23.55px;color:#172B4D;transform:scaleX(0.9586);">Lee Gu</span>
<span class="t" style="left:330.02px;top:855.01px;font-size:17.50px;line-height:23.55px;color:#172B4D;letter-spacing:-0.067px;">13/06/2024, 03:09:12 pm</span>
<span class="t" style="left:890.17px;top:855.01px;font-size:17.50px;line-height:23.55px;color:#172B4D;transform:scaleX(1.0539);">Action</span>
<span class="t" style="left:1449.38px;top:855.01px;font-size:17.50px;line-height:23.55px;color:#AE2E24;letter-spacing:0.093px;">Delete</span>
<span class="t" style="left:2039.36px;top:855.01px;font-size:17.50px;line-height:23.55px;color:#172B4D;transform:scaleX(0.9747);">Pradeep Gupta</span>
<span class="t" style="left:1444.01px;top:954.00px;font-size:17.50px;line-height:23.55px;color:#172B4D;-webkit-text-stroke:0.45px currentColor;">2</span>
</div>
</div>
</body></html>
